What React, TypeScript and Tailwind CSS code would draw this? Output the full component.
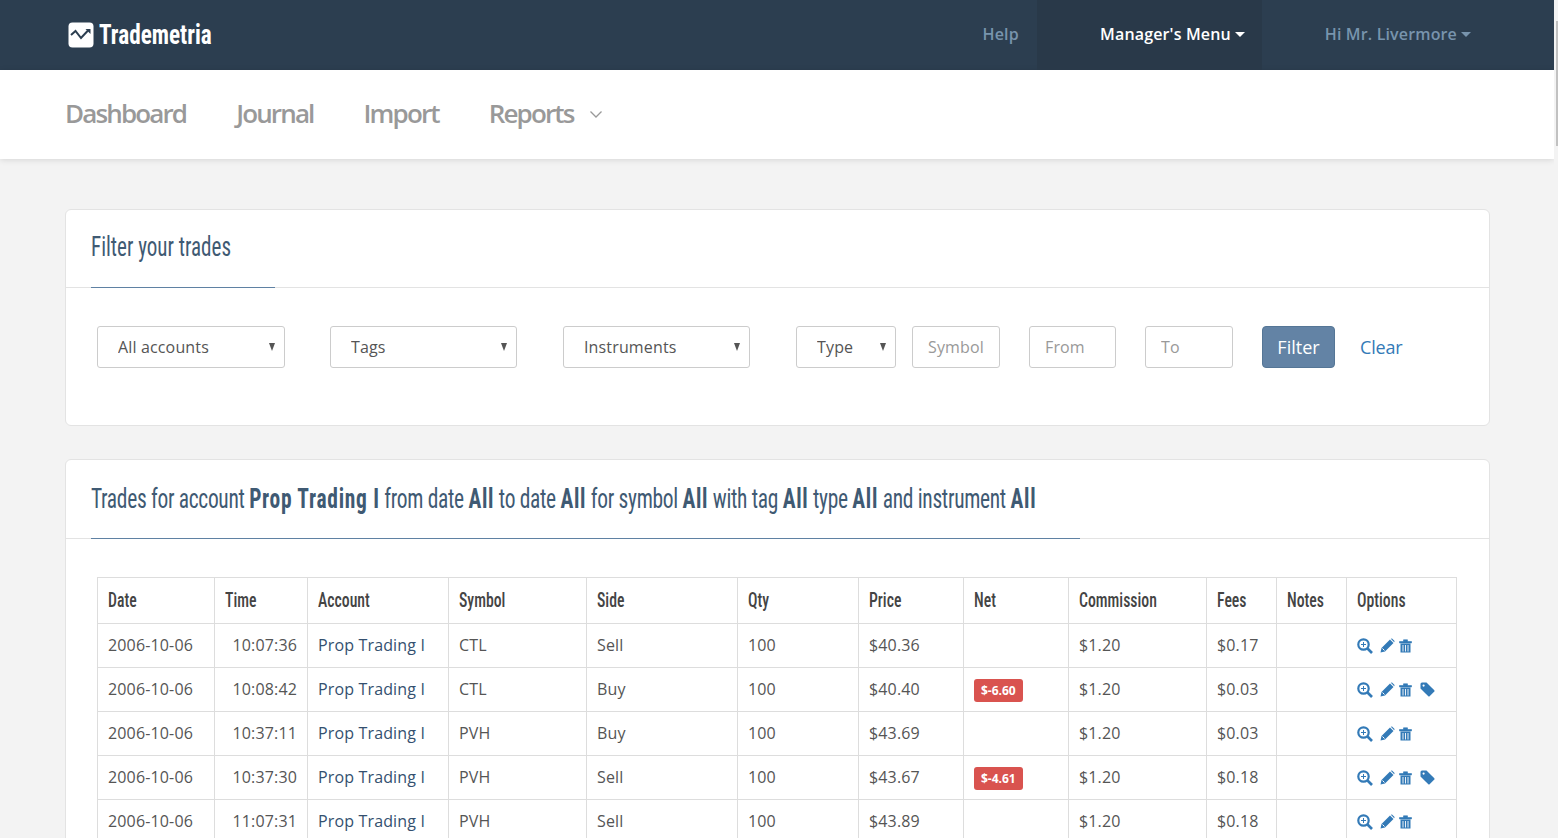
const oswald = "[font-family:'Liberation_Sans_Narrow','Roboto_Condensed','DejaVu_Sans_Condensed',sans-serif]";

const trades = [
  { time: "10:07:36", symbol: "CTL", side: "Sell", price: "$40.36", net: "", fees: "$0.17" },
  { time: "10:08:42", symbol: "CTL", side: "Buy", price: "$40.40", net: "$-6.60", fees: "$0.03" },
  { time: "10:37:11", symbol: "PVH", side: "Buy", price: "$43.69", net: "", fees: "$0.03" },
  { time: "10:37:30", symbol: "PVH", side: "Sell", price: "$43.67", net: "$-4.61", fees: "$0.18" },
  { time: "11:07:31", symbol: "PVH", side: "Sell", price: "$43.89", net: "", fees: "$0.18" },
];

const columns = [
  ["Date", "w-[117px]"],
  ["Time", "w-[93px]"],
  ["Account", "w-[141px]"],
  ["Symbol", "w-[138px]"],
  ["Side", "w-[151px]"],
  ["Qty", "w-[121px]"],
  ["Price", "w-[105px]"],
  ["Net", "w-[105px]"],
  ["Commission", "w-[138px]"],
  ["Fees", "w-[70px]"],
  ["Notes", "w-[70px]"],
  ["Options", "w-[110px]"],
];

function Logo() {
  return (
    <svg width="26" height="26" viewBox="0 0 26 26" className="mr-[5px]">
      <rect x="0.5" y="0.5" width="25" height="25" rx="4" fill="#fff" />
      <path d="M3 13 L7.5 9 L13 16 L20 8.5" fill="none" stroke="#2c3e50" strokeWidth="2" />
      <path d="M17.5 7 H22.5 V12 Z" fill="#2c3e50" />
    </svg>
  );
}

function ZoomIcon() {
  return (
    <svg width="16" height="16" viewBox="0 0 16 16">
      <circle cx="6.5" cy="6.5" r="5.2" fill="none" stroke="#337ab7" strokeWidth="2.2" />
      <path d="M10.5 10.5 L15 15" stroke="#337ab7" strokeWidth="2.6" />
      <path d="M4 6.5 H9 M6.5 4 V9" stroke="#337ab7" strokeWidth="1" />
    </svg>
  );
}

function PencilIcon() {
  return (
    <svg width="15" height="15" viewBox="0 0 15 15">
      <path d="M0.5 14.5 L1.5 10 L10 1.5 L13.5 5 L5 13.5 Z" fill="#337ab7" />
      <path d="M10.8 0.8 L12 0.4 L14.6 3 L14.2 4.2 Z" fill="#337ab7" />
      <path d="M2.5 10.5 L4.5 12.5" stroke="#fff" strokeWidth="1" />
    </svg>
  );
}

function TrashIcon() {
  return (
    <svg width="13" height="14" viewBox="0 0 13 14">
      <path d="M0.5 2.5 H12.5 V4 H0.5 Z M4.5 2.5 V0.8 H8.5 V2.5" fill="#337ab7" stroke="#337ab7" strokeWidth="0.6" />
      <path d="M1.5 4.5 H11.5 V13.5 H1.5 Z" fill="#337ab7" />
      <path d="M4 6 V12.5 M6.5 6 V12.5 M9 6 V12.5" stroke="#fff" strokeWidth="0.9" />
    </svg>
  );
}

function TagIcon() {
  return (
    <svg width="15" height="15" viewBox="0 0 15 15" className="ml-[8px]">
      <path d="M0.5 2 Q0.5 0.5 2 0.5 H6.5 L14.3 8.3 Q14.8 9 14.3 9.6 L9.6 14.3 Q9 14.8 8.3 14.3 L0.5 6.5 Z" fill="#337ab7" />
      <circle cx="3.6" cy="3.6" r="1.1" fill="#fff" />
    </svg>
  );
}

function SelectBox({ label, className }: { label: string; className: string }) {
  return (
    <div className={`relative ${className}`}>
      <select className="h-[42px] w-full appearance-none rounded-[3px] border border-[#ccc] bg-white pl-5 text-[16px] tracking-[0.15px] text-[#555]">
        <option>{label}</option>
      </select>
      <span className="absolute right-[10px] top-[17px] h-0 w-0 border-x-[3.5px] border-t-[8px] border-x-transparent border-t-[#555]" />
    </div>
  );
}

function TextBox({ placeholder, className }: { placeholder: string; className: string }) {
  return (
    <input
      placeholder={placeholder}
      className={`h-[42px] rounded-[3px] border border-[#ccc] bg-white px-[15px] text-[16px] tracking-[0.15px] text-[#555] placeholder:text-[#999] ${className}`}
    />
  );
}

export default function App() {
  return (
    <div className="flex h-screen overflow-hidden bg-[#f3f3f3] font-['Open_Sans',sans-serif] text-[16px] tracking-[0.15px] text-[#555]">
      <div className="min-w-0 flex-1">
        {/* Top bar */}
        <header className="flex h-[70px] items-center bg-[#2c3e50] pl-[68px] pr-[83px]">
          <Logo />
          <span className={`inline-block origin-left scale-x-[0.86] text-[27px] font-bold tracking-normal text-white ${oswald}`}>Trademetria</span>
          <div className="ml-auto flex h-full items-center text-[16px] font-semibold text-[#7894ad]">
            <a className="mr-[18px] pb-[2px]">Help</a>
            <a className="flex h-full w-[225px] items-center justify-end bg-[#293949] pb-[2px] pr-[17px] text-white">
              Manager's Menu
              <span className="ml-1 h-0 w-0 border-x-[5px] border-t-[5px] border-x-transparent border-t-white" />
            </a>
            <a className="ml-[63px] flex items-center pb-[2px]">
              Hi Mr. Livermore
              <span className="ml-1 h-0 w-0 border-x-[5px] border-t-[5px] border-x-transparent border-t-[#7894ad]" />
            </a>
          </div>
        </header>

        {/* Sub nav */}
        <nav className="flex h-[89px] items-center gap-[50px] bg-white pb-[2px] pl-[65px] text-[26px] font-semibold tracking-[-1.85px] text-[#999] shadow-[0_1px_6px_rgba(0,0,0,0.12)]">
          <a>Dashboard</a>
          <a>Journal</a>
          <a>Import</a>
          <a className="flex items-center">
            Reports
            <svg width="14" height="14" viewBox="0 0 14 14" className="ml-[15px]">
              <path d="M1.5 4.5 L7 10 L12.5 4.5" fill="none" stroke="#999" strokeWidth="1.3" />
            </svg>
          </a>
        </nav>

        <main className="pl-[65px] pt-[50px]">
          {/* Filter panel */}
          <section className="h-[217px] w-[1425px] rounded-[6px] border border-[#e3e3e3] bg-white">
            <div className="relative h-[78px] border-b border-[#e3e3e3] pl-[25px] pt-[19px]">
              <h2 className={`inline-block origin-left scale-x-[0.78] whitespace-nowrap text-[27px] leading-[36px] tracking-normal text-[#3f5a73] ${oswald}`}>Filter your trades</h2>
              <span className="absolute -bottom-px left-[25px] h-px w-[184px] bg-[#5f81a3]" />
            </div>
            <div className="flex items-center pl-[31px] pt-[38px]">
              <SelectBox label="All accounts" className="w-[188px]" />
              <SelectBox label="Tags" className="ml-[45px] w-[187px]" />
              <SelectBox label="Instruments" className="ml-[46px] w-[187px]" />
              <SelectBox label="Type" className="ml-[46px] w-[100px]" />
              <TextBox placeholder="Symbol" className="ml-[16px] w-[88px]" />
              <TextBox placeholder="From" className="ml-[29px] w-[87px]" />
              <TextBox placeholder="To" className="ml-[29px] w-[88px]" />
              <button className="ml-[29px] h-[42px] w-[73px] rounded-[4px] border border-[#557696] bg-[#6383a5] text-[18px] tracking-normal text-white">Filter</button>
              <a className="ml-[25px] text-[18px] tracking-[-0.2px] text-[#337ab7]">Clear</a>
            </div>
          </section>

          {/* Trades panel */}
          <section className="mt-[33px] w-[1425px] rounded-[6px] border border-[#e3e3e3] bg-white">
            <div className="relative h-[79px] border-b border-[#e3e3e3] pl-[25px] pt-[21px]">
              <h2 className={`inline-block origin-left scale-x-[0.795] whitespace-nowrap text-[27px] leading-[36px] tracking-[-0.4px] text-[#3f5a73] ${oswald}`}>
                Trades for account <b className="tracking-[0.9px]">Prop Trading I</b> from date <b className="tracking-[0.9px]">All</b> to date <b className="tracking-[0.9px]">All</b> for symbol <b className="tracking-[0.9px]">All</b> with tag <b className="tracking-[0.9px]">All</b> type <b className="tracking-[0.9px]">All</b> and instrument <b className="tracking-[0.9px]">All</b>
              </h2>
              <span className="absolute -bottom-px left-[25px] h-px w-[989px] bg-[#5f81a3]" />
            </div>
            <div className="pl-[31px] pt-[38px]">
              <table className="w-[1360px] table-fixed border-collapse">
                <thead>
                  <tr className="h-[46px]">
                    {columns.map(([name, width]) => (
                      <th key={name} className={`border border-[#ddd] px-[10px] text-left ${width}`}>
                        <span className={`inline-block origin-left scale-x-[0.75] whitespace-nowrap text-[21px] font-medium tracking-normal text-[#444] ${oswald}`}>{name}</span>
                      </th>
                    ))}
                  </tr>
                </thead>
                <tbody>
                  {trades.map((t) => (
                    <tr key={t.time} className="h-[44px]">
                      <td className="border border-[#ddd] px-[10px] pb-[2px]">2006-10-06</td>
                      <td className="border border-[#ddd] px-[10px] pb-[2px] text-right">{t.time}</td>
                      <td className="border border-[#ddd] px-[10px] pb-[2px] text-[#34506f]">Prop Trading I</td>
                      <td className="border border-[#ddd] px-[10px] pb-[2px]">{t.symbol}</td>
                      <td className="border border-[#ddd] px-[10px] pb-[2px]">{t.side}</td>
                      <td className="border border-[#ddd] px-[10px] pb-[2px]">100</td>
                      <td className="border border-[#ddd] px-[10px] pb-[2px]">{t.price}</td>
                      <td className="border border-[#ddd] px-[10px]">
                        {t.net && (
                          <span className="inline-block rounded-[3px] bg-[#d9534f] px-[7px] py-[3px] align-middle text-[12px] font-bold leading-[17px] tracking-normal text-white">{t.net}</span>
                        )}
                      </td>
                      <td className="border border-[#ddd] px-[10px] pb-[2px]">$1.20</td>
                      <td className="border border-[#ddd] px-[10px] pb-[2px]">{t.fees}</td>
                      <td className="border border-[#ddd] px-[10px]" />
                      <td className="border border-[#ddd] px-[10px]">
                        <div className="flex items-center">
                          <ZoomIcon />
                          <span className="ml-[7px]"><PencilIcon /></span>
                          <span className="ml-[4px]"><TrashIcon /></span>
                          {t.net && <TagIcon />}
                        </div>
                      </td>
                    </tr>
                  ))}
                </tbody>
              </table>
            </div>
          </section>
        </main>
      </div>

      {/* Thin page scrollbar */}
      <aside className="w-[4px] shrink-0 bg-[#f3f3f3] pt-[21px]">
        <div className="ml-auto h-[125px] w-[2px] bg-[#c1c1c1]" />
      </aside>
    </div>
  );
}
